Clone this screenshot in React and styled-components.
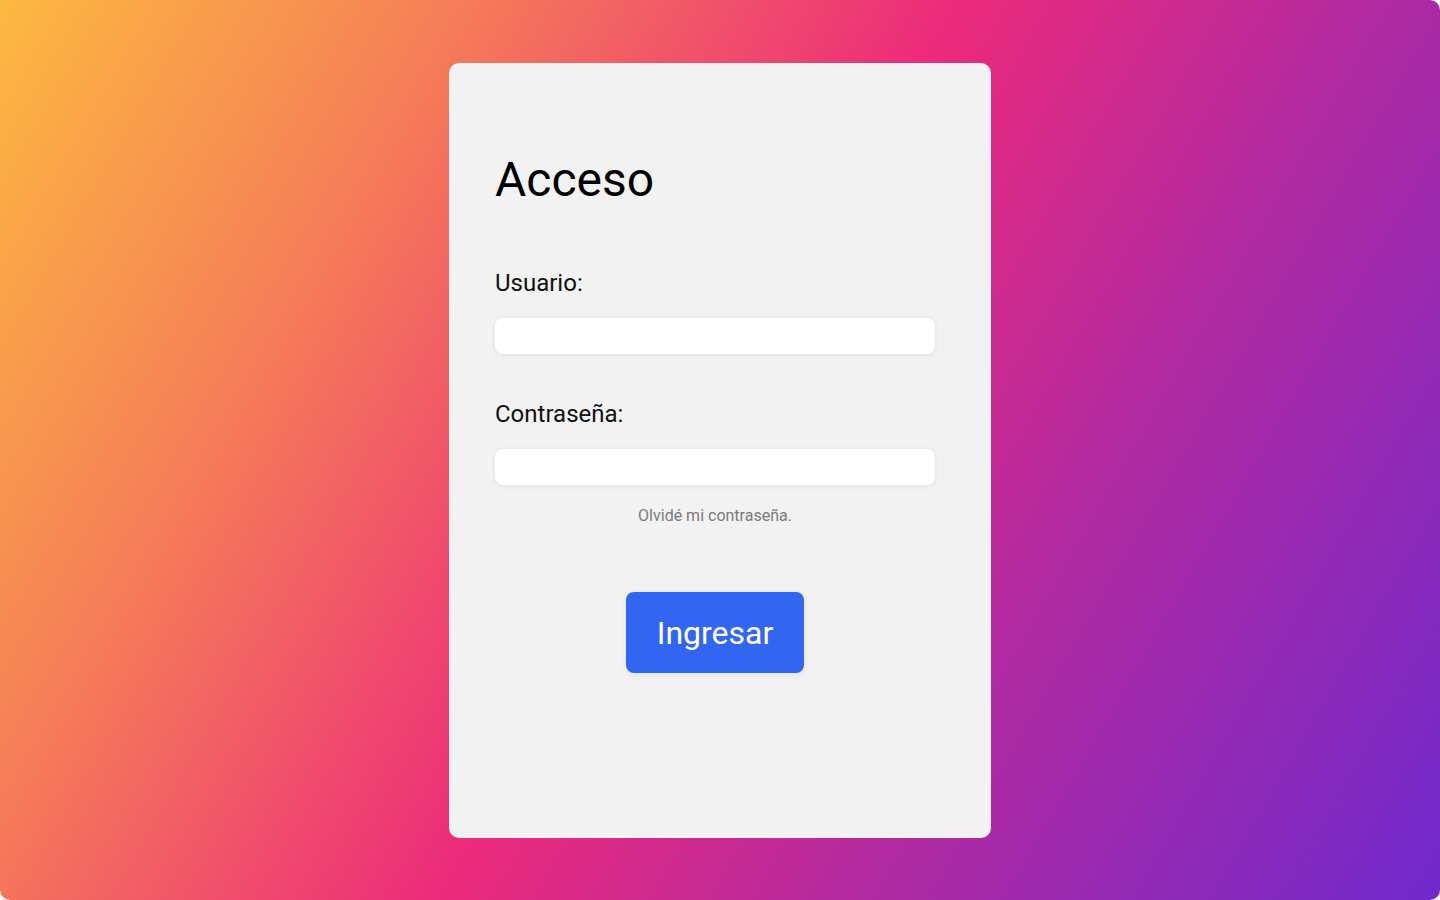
import styled, { createGlobalStyle } from 'styled-components';

const GlobalStyle = createGlobalStyle`
  html, body {
    margin: 0;
    padding: 0;
    background: #ffffff;
  }
  * {
    box-sizing: border-box;
  }
`;

const Page = styled.main`
  width: 1440px;
  height: 900px;
  display: flex;
  align-items: center;
  justify-content: center;
  border-radius: 0 10px 10px 10px;
  background: linear-gradient(
    120deg,
    #fcb940 0%,
    #f57c58 24%,
    #ec2a7b 49%,
    #b22aa0 70%,
    #7029cc 100%
  );
  font-family: Roboto, "Liberation Sans", sans-serif;
`;

const Card = styled.form`
  width: 542px;
  height: 775px;
  padding: 89px 56px 0 46px;
  background: #f2f2f2;
  border-radius: 10px;
  display: flex;
  flex-direction: column;
`;

const Title = styled.h1`
  margin: 0 0 61px;
  font-size: 48px;
  font-weight: 400;
  line-height: 56px;
  color: #000000;
`;

const Label = styled.label`
  display: block;
  margin: 0 0 21px;
  font-size: 24px;
  font-weight: 400;
  line-height: 28px;
  color: #111111;
`;

const Input = styled.input`
  display: block;
  width: 440px;
  height: 36px;
  margin: 0 0 ${p => p.$gap}px;
  padding: 0 12px;
  border: none;
  border-radius: 8px;
  background: #ffffff;
  box-shadow: 0 1px 6px rgba(0, 0, 0, 0.08);
  font-family: inherit;
  font-size: 16px;
  outline: none;
`;

const Forgot = styled.a`
  display: block;
  width: 440px;
  text-align: center;
  font-size: 16px;
  line-height: 19px;
  color: #7a7a7a;
  text-decoration: none;
  cursor: pointer;
`;

const Actions = styled.div`
  width: 440px;
  display: flex;
  justify-content: center;
  margin-top: 67px;
`;

const Button = styled.button`
  width: 178px;
  height: 81px;
  padding: 2px 0 0;
  border: none;
  border-radius: 8px;
  background: #3366f0;
  color: #ffffff;
  font-family: inherit;
  font-size: 32px;
  font-weight: 400;
  box-shadow: 0 1px 6px rgba(0, 0, 0, 0.08);
  cursor: pointer;
`;

export default function App() {
  return (
    <>
      <GlobalStyle />
      <Page>
        <Card onSubmit={e => e.preventDefault()}>
          <Title>Acceso</Title>
          <Label htmlFor="usuario">Usuario:</Label>
          <Input id="usuario" type="text" $gap={46} />
          <Label htmlFor="clave">Contraseña:</Label>
          <Input id="clave" type="password" $gap={21} />
          <Forgot>Olvidé mi contraseña.</Forgot>
          <Actions>
            <Button type="submit">Ingresar</Button>
          </Actions>
        </Card>
      </Page>
    </>
  );
}
